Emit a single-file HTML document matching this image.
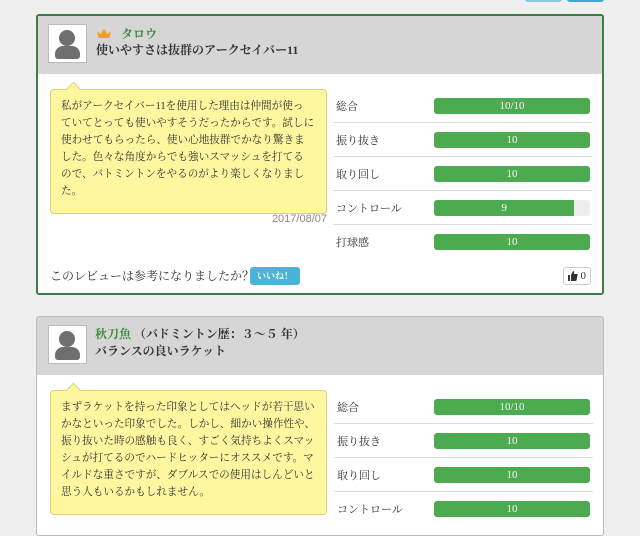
<!DOCTYPE html>
<html><head><meta charset="utf-8"><style>
*{margin:0;padding:0;box-sizing:border-box}
body{width:640px;height:517px;background:#efefef;overflow:hidden;position:relative;font-family:"Liberation Serif","Noto Serif CJK SC",serif;color:#333}
.abs{position:absolute}
.card{position:absolute;left:36px;width:568px;background:#fff;border-radius:3px;overflow:hidden}
.hdr{position:absolute;left:0;right:0;top:0;height:58px;background:#d6d6d6}
.av{position:absolute;left:10px;top:8px;width:39px;height:39px;background:#fff;border:1px solid #bbb}
.av .h{position:absolute;left:10px;top:5px;width:16px;height:16px;border-radius:50%;background:#6f6f6f}
.av .b{position:absolute;left:6px;top:21px;width:25px;height:13px;border-radius:8px 8px 3px 3px;background:#6f6f6f}
.name{position:absolute;font-size:12px;color:#3a8a3a;font-weight:bold}
.title{position:absolute;font-size:12px;font-weight:bold;color:#333}
.yb{position:absolute;left:12px;width:277px;background:#fff7a0;border:1px solid #ddd27a;border-radius:4px;padding:8px 4px 8px 10px;font-size:10.6px;line-height:17px;color:#333;white-space:nowrap}
.yb:before{content:"";position:absolute;left:17px;top:-6px;width:10px;height:10px;background:#fff7a0;border-left:1px solid #ddd27a;border-top:1px solid #ddd27a;transform:rotate(45deg)}
.lbl{position:absolute;font-size:11px;color:#333}
.bar{position:absolute;width:156px;height:16px;border-radius:3px;background:#eee;overflow:hidden}
.bar i{display:block;height:100%;background:#4cab4e;color:#fff;font-style:normal;font-size:11px;line-height:16px;text-align:center}
.sep{position:absolute;width:259px;height:1px;background:#ddd}
</style></head><body>
<div class="abs" style="left:525px;top:-6px;width:37px;height:8px;background:#8ccbe3;border-radius:3px"></div>
<div class="abs" style="left:567px;top:-6px;width:37px;height:8px;background:#3fa7d4;border-radius:3px"></div>

<div class="card" style="top:14px;height:281px;border:2px solid #3d7c47">
 <div class="hdr"></div>
 <div class="av" style="left:10px;top:8px"><div class="h"></div><div class="b"></div></div>
 <svg class="abs" style="left:58px;top:12px" width="16" height="11" viewBox="0 0 16 11"><path d="M1 3 L4.5 6 L8 1 L11.5 6 L15 3 L13.5 10 L2.5 10Z" fill="#f0a030"/></svg>
 <div class="name" style="left:83px;top:9px">タロウ</div>
 <div class="title" style="left:58px;top:25px">使いやすさは抜群のアークセイバー11</div>
 <div class="yb" style="top:73px;height:125px">私がアークセイバー11を使用した理由は仲間が使っ<br>ていてとっても使いやすそうだったからです。試しに<br>使わせてもらったら、使い心地抜群でかなり驚きま<br>した。色々な角度からでも強いスマッシュを打てる<br>ので、バトミントンをやるのがより楽しくなりまし<br>た。</div>
 <div class="abs" style="left:200px;top:197px;width:89px;text-align:right;font-size:11px;color:#888;font-family:'Liberation Sans',sans-serif">2017/08/07</div>
 <div class="lbl" style="left:298px;top:82px">総合</div><div class="bar" style="left:396px;top:82px"><i style="width:100%">10/10</i></div>
 <div class="sep" style="left:295px;top:106px"></div>
 <div class="lbl" style="left:298px;top:116px">振り抜き</div><div class="bar" style="left:396px;top:116px"><i style="width:100%">10</i></div>
 <div class="sep" style="left:295px;top:140px"></div>
 <div class="lbl" style="left:298px;top:150px">取り回し</div><div class="bar" style="left:396px;top:150px"><i style="width:100%">10</i></div>
 <div class="sep" style="left:295px;top:174px"></div>
 <div class="lbl" style="left:298px;top:184px">コントロール</div><div class="bar" style="left:396px;top:184px"><i style="width:90%">9</i></div>
 <div class="sep" style="left:295px;top:208px"></div>
 <div class="lbl" style="left:298px;top:218px">打球感</div><div class="bar" style="left:396px;top:218px"><i style="width:100%">10</i></div>
 <div class="abs" style="left:12px;top:251px;font-size:12px">このレビューは参考になりましたか？</div>
 <div class="abs" style="left:212px;top:251px;width:50px;height:18px;background:#4bb3d6;border-radius:3px;color:#fff;font-size:9px;line-height:18px;text-align:center;font-weight:bold">いいね！</div>
 <div class="abs" style="left:525px;top:251px;width:28px;height:18px;border:1px solid #ccc;border-radius:3px;font-size:11px;line-height:16px;text-align:right;padding-right:4px">0</div>
 <svg class="abs" style="left:530px;top:255px" width="10" height="10" viewBox="0 0 10 10"><path d="M0 4h2v6H0z M3 4 L5 0 Q6.5 0 6 3 H9.5 Q10 3.5 9.5 4.5 L8.5 9.5 Q8 10 7 10 H3z" fill="#333"/></svg>
</div>

<div class="card" style="top:316px;height:220px;border:1px solid #bbb">
 <div class="hdr"></div>
 <div class="av" style="left:11px;top:8px"><div class="h"></div><div class="b"></div></div>
 <div class="name" style="left:58px;top:8px">秋刀魚 <span style="color:#333">（バドミントン歴：３〜５ 年）</span></div>
 <div class="title" style="left:58px;top:25px">バランスの良いラケット</div>
 <div class="yb" style="top:73px;height:125px;left:13px">まずラケットを持った印象としてはヘッドが若干思い<br>かなといった印象でした。しかし、細かい操作性や、<br>振り抜いた時の感触も良く、すごく気持ちよくスマッ<br>シュが打てるのでハードヒッターにオススメです。マ<br>イルドな重さですが、ダブルスでの使用はしんどいと<br>思う人もいるかもしれません。</div>
 <div class="lbl" style="left:300px;top:82px">総合</div><div class="bar" style="left:397px;top:82px"><i style="width:100%">10/10</i></div>
 <div class="sep" style="left:297px;top:106px"></div>
 <div class="lbl" style="left:300px;top:116px">振り抜き</div><div class="bar" style="left:397px;top:116px"><i style="width:100%">10</i></div>
 <div class="sep" style="left:297px;top:140px"></div>
 <div class="lbl" style="left:300px;top:150px">取り回し</div><div class="bar" style="left:397px;top:150px"><i style="width:100%">10</i></div>
 <div class="sep" style="left:297px;top:174px"></div>
 <div class="lbl" style="left:300px;top:184px">コントロール</div><div class="bar" style="left:397px;top:184px"><i style="width:100%">10</i></div>
</div>
</body></html>
